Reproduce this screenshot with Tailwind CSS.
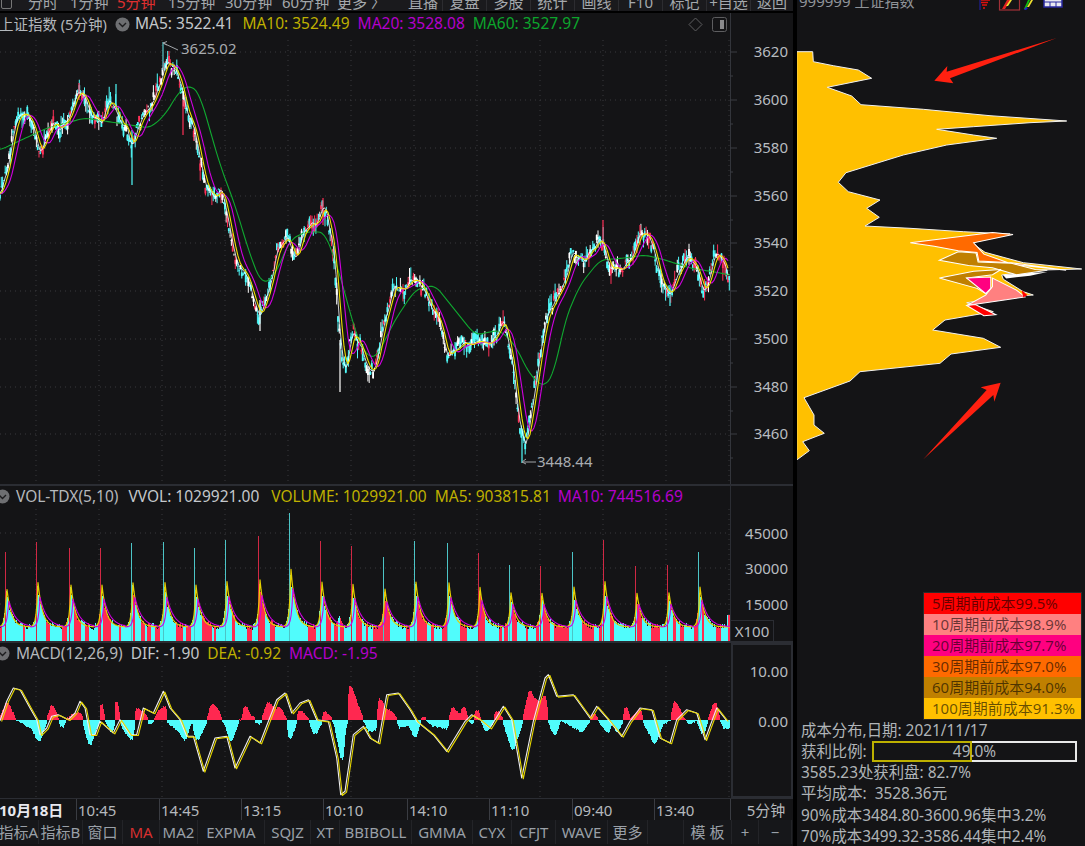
<!DOCTYPE html>
<html lang="zh"><head><meta charset="utf-8">
<script src="https://cdn.jsdelivr.net/npm/@tailwindcss/browser@4"></script>
<title>上证指数</title></head>
<body class="m-0 bg-[#141416]">
<div class="w-[1085px] h-[846px] overflow-hidden flex bg-[#141416] text-[15px] leading-none text-[#b4b8bc] font-['Noto_Sans','Noto_Sans_CJK_SC',sans-serif]">

  <!-- left column -->
  <div class="w-[793px] h-full flex flex-col shrink-0">
    <!-- toolbar -->
    <div class="h-[13px] shrink-0 overflow-hidden bg-[#1a1a1d] border-b-2 border-black">
      <div class="h-[24px] -mt-[10px] flex items-center text-[#a4a8ac] whitespace-nowrap [&>span]:shrink-0">
        <span class="w-[28px] pl-[1px]"><span class="block w-[11px] h-[14px] border border-[#777] rounded-[2px]"></span></span>
        <span class="w-[42px]">分时</span>
        <span class="w-[47px]">1分钟</span>
        <span class="w-[51px] text-[#e03030]">5分钟</span>
        <span class="w-[57px]">15分钟</span>
        <span class="w-[57px]">30分钟</span>
        <span class="w-[55px]">60分钟</span>
        <span class="w-[71px]">更多 〉</span>
        <span class="w-[35px] border-r border-[#2c2c30] h-[24px] flex items-center">直播</span>
        <span class="w-[44px] border-r border-[#2c2c30] h-[24px] flex items-center justify-center">复盘</span>
        <span class="w-[44px] border-r border-[#2c2c30] h-[24px] flex items-center justify-center">多股</span>
        <span class="w-[44px] border-r border-[#2c2c30] h-[24px] flex items-center justify-center">统计</span>
        <span class="w-[44px] border-r border-[#2c2c30] h-[24px] flex items-center justify-center">画线</span>
        <span class="w-[44px] border-r border-[#2c2c30] h-[24px] flex items-center justify-center">F10</span>
        <span class="w-[44px] border-r border-[#2c2c30] h-[24px] flex items-center justify-center">标记</span>
        <span class="w-[44px] border-r border-[#2c2c30] h-[24px] flex items-center justify-center">+自选</span>
        <span class="w-[42px] h-[24px] flex items-center justify-center">返回</span>
      </div>
    </div>

    <!-- main pane -->
    <div class="h-[473px] shrink-0 flex border-b-2 border-[#2b2d33]">
      <div class="w-[730px] flex flex-col shrink-0">
        <div class="h-[22px] shrink-0 flex items-center whitespace-nowrap text-[15.5px]">
          <span class="w-[116px] -ml-[1px] shrink-0 text-[14.5px]">上证指数 (5分钟)</span>
          <svg width="15" height="15" viewBox="0 0 15 15" class="shrink-0"><circle cx="7.5" cy="7.5" r="7" fill="#6e6f72"/><path d="M4 6l3.5 3.5L11 6" fill="none" stroke="#1c1c1e" stroke-width="1.4"/></svg>
          <span class="ml-[5px] text-[#c4c8cc]">MA5: 3522.41</span>
          <span class="ml-[9px] text-[#bfb000]">MA10: 3524.49</span>
          <span class="ml-[8px] text-[#b400cc]">MA20: 3528.08</span>
          <span class="ml-[8px] text-[#0ca52c]">MA60: 3527.97</span>
          <span class="flex-1"></span>
          <svg width="15" height="15" viewBox="0 0 15 15" class="shrink-0 mr-[9px]"><path d="M7.5 1L14 7.5 7.5 14 1 7.5z" fill="none" stroke="#5e5e60" stroke-width="1"/></svg>
          <svg width="15" height="15" viewBox="0 0 15 15" class="shrink-0 mr-[3px]"><rect x=".5" y=".5" width="14" height="14" rx="2" fill="none" stroke="#5e5e60"/><rect x="8" y="3" width="4" height="9" fill="#8a8a8c"/></svg>
        </div>
        <svg id="main" width="730" height="449" viewBox="0 35 730 449" class="block"></svg>
      </div>
      <svg id="mainAxis" width="63" height="471" viewBox="730 13 63 471" class="block" font-size="15" fill="#b8bcc0">
        <g text-anchor="end">
          <text x="788" y="57">3620</text><text x="788" y="105">3600</text><text x="788" y="153">3580</text><text x="788" y="201">3560</text><text x="788" y="248">3540</text><text x="788" y="296">3520</text><text x="788" y="344">3500</text><text x="788" y="392">3480</text><text x="788" y="439">3460</text>
        </g>
      </svg>
    </div>

    <!-- volume pane -->
    <div class="h-[157px] shrink-0 flex border-b-2 border-[#2b2d33]">
      <div class="w-[730px] flex flex-col shrink-0">
        <div class="h-[21px] shrink-0 flex items-center whitespace-nowrap text-[15.5px]">
          <svg width="15" height="15" viewBox="0 0 15 15" class="shrink-0 -ml-[5px]"><circle cx="7.5" cy="7.5" r="7" fill="#6e6f72"/><path d="M4 6l3.5 3.5L11 6" fill="none" stroke="#1c1c1e" stroke-width="1.4"/></svg>
          <span class="ml-[6px]">VOL-TDX(5,10)</span>
          <span class="ml-[10px] text-[#c4c8cc]">VVOL: 1029921.00</span>
          <span class="ml-[12px] text-[#bfb000]">VOLUME: 1029921.00</span>
          <span class="ml-[8px] text-[#bfb000]">MA5: 903815.81</span>
          <span class="ml-[7px] text-[#b400cc]">MA10: 744516.69</span>
        </div>
        <svg id="vol" width="730" height="134" viewBox="0 508 730 134" class="block"></svg>
      </div>
      <div class="relative w-[63px] flex flex-col items-end pr-[5px] text-[15px] text-[#b8bcc0] border-l border-[#2b2d33]">
        <span class="mt-[40px]">45000</span>
        <span class="mt-[20px]">30000</span>
        <span class="mt-[21px]">15000</span>
        <span class="absolute left-0 bottom-0 w-[43px] h-[21px] border-r border-t border-[#2b2d33] bg-[#141416] flex items-center justify-center">X100</span>
      </div>
    </div>

    <!-- macd pane -->
    <div class="h-[155px] shrink-0 flex">
      <div class="w-[731px] flex flex-col shrink-0">
        <div class="h-[21px] shrink-0 flex items-center whitespace-nowrap text-[15.5px]">
          <svg width="15" height="15" viewBox="0 0 15 15" class="shrink-0 -ml-[5px]"><circle cx="7.5" cy="7.5" r="7" fill="#6e6f72"/><path d="M4 6l3.5 3.5L11 6" fill="none" stroke="#1c1c1e" stroke-width="1.4"/></svg>
          <span class="ml-[6px]">MACD(12,26,9)</span>
          <span class="ml-[8px] text-[#c4c8cc]">DIF: -1.90</span>
          <span class="ml-[8px] text-[#bfb000]">DEA: -0.92</span>
          <span class="ml-[8px] text-[#b400cc]">MACD: -1.95</span>
        </div>
        <svg id="macd" width="731" height="134" viewBox="0 666 731 134" class="block overflow-visible"></svg>
      </div>
      <div class="w-[62px] border-2 border-[#2b2d33] flex flex-col items-end pr-[3px] text-[15px] text-[#b8bcc0]">
        <span class="mt-[19px]">10.00</span>
        <span class="mt-[35px]">0.00</span>
      </div>
    </div>

    <!-- time axis -->
    <div class="h-[22px] shrink-0 flex items-center border-t border-[#2b2d33] whitespace-nowrap [&>span]:pt-[2px]">
      <span class="w-[77px] -ml-[1px] shrink-0 font-bold text-[#e8e8ee]">10月18日</span>
      <span class="w-[83px] pl-[1px] border-l border-[#3a3c42] h-full flex items-center">10:45</span>
      <span class="w-[82px] pl-[1px] border-l border-[#3a3c42] h-full flex items-center">14:45</span>
      <span class="w-[82px] pl-[1px] border-l border-[#3a3c42] h-full flex items-center">13:15</span>
      <span class="w-[84px] pl-[1px] border-l border-[#3a3c42] h-full flex items-center">10:10</span>
      <span class="w-[82px] pl-[1px] border-l border-[#3a3c42] h-full flex items-center">14:10</span>
      <span class="w-[83px] pl-[1px] border-l border-[#3a3c42] h-full flex items-center">11:10</span>
      <span class="w-[82px] pl-[1px] border-l border-[#3a3c42] h-full flex items-center">09:40</span>
      <span class="w-[76px] pl-[1px] border-l border-[#3a3c42] h-full flex items-center">13:40</span>
      <span class="flex-1 border-l border-[#3a3c42] h-full flex items-center justify-center pl-[8px]">5分钟</span>
    </div>

    <!-- bottom bar -->
    <div class="h-[24px] shrink-0 flex items-center text-[#9aa0a8] bg-[#16171a] whitespace-nowrap [&>span]:h-full [&>span]:flex [&>span]:items-center [&>span]:justify-center [&>span]:border-r [&>span]:border-[#232428] [&>span]:pt-[1px]">
      <span class="w-[39px] shrink-0 !justify-end">指标A</span>
      <span class="w-[44px] shrink-0">指标B</span>
      <span class="w-[40px] shrink-0">窗口</span>
      <span class="w-[37px] shrink-0 text-[#d83030]">MA</span>
      <span class="w-[38px] shrink-0">MA2</span>
      <span class="w-[67px] shrink-0">EXPMA</span>
      <span class="w-[46px] shrink-0">SQJZ</span>
      <span class="w-[29px] shrink-0">XT</span>
      <span class="w-[72px] shrink-0">BBIBOLL</span>
      <span class="w-[61px] shrink-0">GMMA</span>
      <span class="w-[39px] shrink-0">CYX</span>
      <span class="w-[44px] shrink-0">CFJT</span>
      <span class="w-[52px] shrink-0">WAVE</span>
      <span class="w-[40px] shrink-0">更多</span>
      <span class="w-[36px] shrink-0"></span>
      <span class="w-[48px] shrink-0">模 板</span>
      <span class="w-[27px] shrink-0">+</span>
      <span class="w-[33px] shrink-0">−</span>
    </div>
  </div>

  <!-- divider -->
  <div class="w-[4px] h-full bg-black shrink-0"></div>

  <!-- right panel -->
  <div class="flex-1 h-full flex flex-col relative">
    <div class="h-[12px] shrink-0 overflow-hidden relative">
      <div class="-mt-[6px] h-[14px] flex items-center pl-[2px] text-[#8f9398] whitespace-nowrap">999999 上证指数</div>
      <svg width="288" height="12" viewBox="797 0 288 12" class="absolute left-0 top-0">
        <g><path d="M981 0h9M981 2.5h7M982 5h5M983 8h2" stroke="#e01010" stroke-width="1.6"/><path d="M980 0v10" stroke="#2020b0" stroke-width="1"/></g>
        <rect x="999.5" y="-3" width="20" height="13" fill="none" stroke="#a03038" stroke-width="1.2"/>
        <path d="M1002 9l5-9h4l-6 9z" fill="#e02020"/><path d="M1006 6l4-6h2l-4 6z" fill="#f0e030"/>
        <path d="M1024 9l4-9h2l-4 9z" fill="#10c010"/><path d="M1027 7l4-7h2l-4 7z" fill="#f0e030"/><path d="M1024 10l2-3 2 1-2 2z" fill="#2020d0"/>
        <rect x="1044" y="-2" width="18" height="9" fill="#e8e8f0" stroke="#2828a0" stroke-width="1.5"/><path d="M1044 2h18M1050 2v5M1056 2v5" stroke="#2828a0"/>
      </svg>
    </div>
    <svg width="288" height="580" viewBox="797 12 288 580" class="block shrink-0">
      <polygon id="chips" fill="#ffc000" stroke="#f0f0f0" stroke-width="1" stroke-linejoin="round"/>
      <g transform="translate(900,225) scale(.3425)" stroke="#fff" stroke-width="3">
        <path d="M300 145L430 137 380 148 310 156z" fill="#fff" stroke="none"/>
        <polygon fill="#ff6a00" points="30,52 270,22 330,28 215,52 245,85 330,115 485,132 410,122 325,110 230,105 225,80 170,75 100,62"/>
        <polygon fill="#c08000" points="115,103 170,78 222,82 228,108 325,112 395,130 430,132 340,145 295,132 270,125 200,118"/>
        <polygon fill="#c08000" points="115,155 215,135 295,130 270,145 195,155 250,190 255,203 225,185"/>
        <polygon fill="#ff8080" points="270,155 340,190 365,210 300,220 195,235 250,205 270,180"/>
        <polygon fill="#ff0080" points="195,155 265,152 265,185 250,200"/>
        <polygon fill="#ff0000" points="195,235 220,232 280,262 245,265"/>
        <polygon fill="#ff0000" stroke="none" points="355,190 372,205 360,212"/>
      </g>
      <g transform="translate(790,0) scale(.33333)"><polygon fill="#ff2010" points="800,114 470,215 472,198 433,242 490,250 480,235"/></g>
      <g transform="translate(790,220) scale(.33333)"><polygon fill="#ff2010" points="400,718 590,510 572,502 632,488 613,545 610,525"/></g>
    </svg>
    <div class="w-[159px] ml-[126px] border border-[#2a2a2a] shrink-0 text-black/60 whitespace-nowrap">
      <div class="h-[21px] pl-[8px] flex items-center bg-[#ff0000]">5周期前成本99.5%</div>
      <div class="h-[21px] pl-[8px] flex items-center bg-[#ff8080]">10周期前成本98.9%</div>
      <div class="h-[21px] pl-[8px] flex items-center bg-[#ff0080]">20周期前成本97.7%</div>
      <div class="h-[21px] pl-[8px] flex items-center bg-[#ff6a00]">30周期前成本97.0%</div>
      <div class="h-[21px] pl-[8px] flex items-center bg-[#c08000]">60周期前成本94.0%</div>
      <div class="h-[21px] pl-[8px] flex items-center bg-[#ffc000]">100周期前成本91.3%</div>
    </div>
    <div class="pl-[4px] flex flex-col whitespace-nowrap text-[#b0b4b8] text-[15.4px]">
      <div class="h-[21px] flex items-center">成本分布,日期:&nbsp;2021/11/17</div>
      <div class="h-[21px] flex items-center"><span class="w-[71px] shrink-0">获利比例:</span>
        <div class="relative w-[205px] h-[21px] border-2 border-[#e8e8e8] flex items-center justify-center shrink-0">
          <div class="absolute -left-[2px] -top-[2px] w-[100px] h-[21px] border-2 border-[#bdb000]"></div>
          <span class="relative">49.0%</span>
        </div>
      </div>
      <div class="h-[21.4px] flex items-center">3585.23处获利盘:&nbsp;82.7%</div>
      <div class="h-[21.4px] flex items-center">平均成本:&nbsp;&nbsp;3528.36元</div>
      <div class="h-[21.4px] flex items-center">90%成本3484.80-3600.96集中3.2%</div>
      <div class="h-[21.4px] flex items-center">70%成本3499.32-3586.44集中2.4%</div>
    </div>
  </div>
</div>

<script>
let seed=12345;function R(){seed=(seed*1664525+1013904223)%4294967296;return seed/4294967296;}
function interp(p,x){if(x<=p[0][0])return p[0][1];for(let i=1;i<p.length;i++){if(x<=p[i][0]){const a=p[i-1],b=p[i];return a[1]+(b[1]-a[1])*(x-a[0])/(b[0]-a[0]);}}return p[p.length-1][1];}
function smooth(p,w,lag,step){let o=[];for(let x=p[0][0];x<=p[p.length-1][0];x+=step){let s=0,n=0;for(let d=-w;d<=w;d+=1){s+=interp(p,x+d-lag);n++;}o.push([x,s/n]);}return o;}
function line(p,c,w){return '<polyline fill="none" stroke="'+c+'" stroke-width="'+w+'" stroke-linejoin="round" points="'+p.map(a=>a[0].toFixed(1)+','+a[1].toFixed(1)).join(' ')+'"/>';}
const dot='#39393c';
const vx=[];for(let x=36;x<730;x+=63)vx.push(x);

/* main chart */
const px0=[[0,198],[8,165],[14,125],[22,113],[30,115],[38,150],[44,143],[52,122],[60,128],[68,115],[78,90],[84,98],[92,118],[100,125],[110,100],[118,118],[125,125],[132,150],[140,118],[150,105],[158,90],[165,60],[172,65],[180,80],[186,110],[195,135],[205,185],[213,195],[222,190],[232,245],[240,270],[250,285],[260,320],[268,290],[278,245],[288,235],[295,260],[305,225],[315,225],[325,205],[333,250],[340,340],[345,380],[352,330],[360,345],[372,378],[380,340],[392,290],[405,285],[415,280],[425,295],[435,310],[448,355],[460,345],[475,340],[490,345],[503,320],[512,360],[520,430],[525,450],[535,385],[545,320],[552,305],[562,290],[572,255],[585,260],[600,240],[610,270],[620,272],[632,255],[642,232],[650,240],[660,280],[670,298],[680,265],[692,255],[703,295],[716,250],[724,265],[730,290]];
const px=[];for(let x=0;x<=730;x+=3.5){px.push([x,interp(px0,x)+(R()-.5)*9]);}
const g60=[[0,150],[47,128],[85,118],[130,125],[150,128],[165,115],[180,90],[192,85],[200,95],[210,130],[220,165],[235,205],[250,255],[262,285],[275,275],[290,240],[305,232],[325,232],[340,275],[352,320],[362,350],[375,360],[395,320],[415,290],[435,285],[455,310],[475,335],[500,330],[515,345],[530,375],[545,388],[555,370],[565,320],[580,285],[600,260],[625,258],[645,255],[665,260],[690,268],[715,272],[730,275]];
let h='';
[52,100,148,196,243,291,339,387,434].forEach(y=>h+='<line x1="0" x2="730" y1="'+y+'" y2="'+y+'" stroke="'+dot+'" stroke-dasharray="1 4"/>');
vx.forEach(x=>h+='<line x1="'+x+'" x2="'+x+'" y1="40" y2="484" stroke="'+dot+'" stroke-dasharray="1 4"/>');
for(let x=0;x<730;x+=1.3){
  const c=interp(px,x)+(R()-.5)*6;const o=c+(R()-.5)*15;
  const t=Math.min(o,c)-R()*R()*13,b=Math.max(o,c)+R()*R()*13;
  const r=R();const col=r<.24?'#ffffff':(r<.44?'#ff3058':'#50fcfc');
  h+='<line x1="'+x+'" x2="'+x+'" y1="'+t+'" y2="'+b+'" stroke="'+col+'" stroke-width="1"/>';
  h+='<line x1="'+x+'" x2="'+x+'" y1="'+Math.min(o,c)+'" y2="'+Math.max(o,c)+'" stroke="'+col+'" stroke-width="1.8"/>';
}
[[132,130,185,'#50fcfc'],[163,42,70,'#58c8cc'],[340,340,392,'#fff'],[260,300,331,'#fff'],[670,285,306,'#50fcfc'],[603,220,250,'#ff3058'],[640,225,245,'#ff3058'],[323,198,225,'#ff3058'],[522,430,463,'#50fcfc'],[79,83,100,'#ff3058'],[116,84,110,'#50fcfc'],[183,100,135,'#ff3058']].forEach(w=>h+='<line x1="'+w[0]+'" x2="'+w[0]+'" y1="'+w[1]+'" y2="'+w[2]+'" stroke="'+w[3]+'" stroke-width="1.2"/>');
h+=line(smooth(g60,6,0,2),'#10a830',1.1);
h+=line(smooth(px,1,1,2),'#ffffff',.8);
h+=line(smooth(px,6,7,2),'#d000e0',1.1);
h+=line(smooth(px,3,3,2),'#f0e000',1.1);
h+='<path d="M167 41.5l-4 1.5 4 2M163 43l15 7" fill="none" stroke="#a0a4a8"/><text x="181" y="54" font-size="15" fill="#a8acb0">3625.02</text>';
h+='<path d="M526 459l-4 3 4 2M522 462h14" fill="none" stroke="#a0a4a8"/><text x="537" y="467" font-size="15" fill="#a8acb0">3448.44</text>';
document.getElementById('main').innerHTML=h;

let ax='<line x1="730.5" x2="730.5" y1="13" y2="484" stroke="#33353b"/>';
[52,100,148,196,243,291,339,387,434].forEach(y=>ax+='<line x1="730" x2="737" y1="'+y+'" y2="'+y+'" stroke="#3a3c42"/><line x1="730" x2="733" y1="'+(y+24)+'" y2="'+(y+24)+'" stroke="#3a3c42"/>');
document.getElementById('mainAxis').insertAdjacentHTML('afterbegin',ax);

/* volume */
const pk=[[4.7,553,0],[36,543,0],[69,549,0],[100,549,0],[131,544,1],[163,543,1],[194,549,1],[225,541,1],[258,537,0],[289,514,1],[320,542,0],[351,547,0],[383,558,1],[414,542,1],[447,544,1],[478,554,0],[509,566,1],[540,567,0],[572,553,1],[603,541,0],[635,567,0],[667,566,0],[698,553,1]];
function nearest(x){let best=pk[0];pk.forEach(p=>{if(x>=p[0]-5)best=p;});return best;}
function env(x,f,lag,w){const p=nearest(x);const H=642-p[1];const d=x-p[0]-lag;const e=d>=0?Math.exp(-d/w):Math.exp(d/1.6);return 14+f*H*e;}
let v='';
[534,569,605].forEach(y=>v+='<line x1="0" x2="730" y1="'+y+'" y2="'+y+'" stroke="'+dot+'" stroke-dasharray="1 4"/>');
vx.forEach(x=>v+='<line x1="'+x+'" x2="'+x+'" y1="510" y2="642" stroke="'+dot+'" stroke-dasharray="1 4"/>');
let col=1,run=0;
for(let x=0;x<730;x+=1){
  if(run--<=0){col=R()<.62?1:0;run=Math.floor(R()*4)+1;}
  let ht=env(x,.42,.8,5.5)+(R()-.55)*6;
  if(ht<4)ht=4;
  if(Math.abs(x-339)<5)ht=Math.max(ht,25-Math.abs(x-339)*2.5);
  if(x>726)ht=26;
  v+='<rect x="'+x+'" width="1" y="'+(642-Math.round(ht))+'" height="'+Math.round(ht)+'" fill="'+(col?'#50fcfc':'#ff2c50')+'"/>';
}
pk.forEach(p=>{v+='<rect x="'+Math.round(p[0])+'" width="1" y="'+p[1]+'" height="'+(642-p[1])+'" fill="'+(p[2]?'#4cc4c6':'#d02844')+'"/>';});
let yl=[],ml=[];for(let x=0;x<=730;x+=1){yl.push([x,642-env(x,.45,2,4.5)]);ml.push([x,642-env(x,.3,4,7)]);}
v+=line(yl,'#e6d000',1.2);v+=line(ml,'#d000e0',1.1);
document.getElementById('vol').innerHTML=v;

/* MACD */
const hist=[[0,3],[3,8],[7,18],[12,8],[16,0],[20,-1],[27,-6],[33,-10],[39,-22],[44,-8],[47,0],[52,15],[57,4],[60,-2],[62,-8],[66,0],[72,5],[80,8],[83,0],[84,-4],[90,-26],[96,-8],[100,-1],[101,17],[105,0],[108,-5],[112,-13],[115,0],[116,21],[120,0],[125,-12],[132,-20],[135,0],[137,12],[145,6],[148,0],[150,-5],[154,0],[158,8],[165,14],[167,0],[170,-4],[180,-12],[185,-21],[190,-5],[193,0],[195,-14],[198,-20],[205,-5],[207,0],[212,16],[218,10],[222,0],[226,-5],[231,-22],[236,-8],[239,0],[243,2],[245,15],[250,5],[255,2],[256,-6],[257,0],[260,-5],[262,0],[268,18],[275,12],[280,12],[287,0],[290,-20],[296,-3],[300,10],[305,5],[309,0],[315,-15],[320,-6],[322,0],[325,9],[330,3],[332,0],[335,-5],[340,-30],[342,-42],[345,-10],[348,0],[350,35],[355,22],[360,8],[363,0],[365,-3],[370,-12],[375,-10],[377,0],[380,22],[385,12],[390,10],[395,3],[397,0],[400,-8],[410,-6],[415,-18],[420,-3],[423,4],[426,0],[433,-6],[447,-9],[449,0],[453,13],[460,4],[464,14],[468,0],[473,-4],[477,11],[481,0],[486,-11],[492,-5],[497,10],[503,0],[513,-31],[523,0],[530,30],[533,22],[540,18],[545,25],[548,0],[555,-16],[560,0],[573,-7],[582,-12],[590,0],[594,7],[598,0],[608,-13],[613,0],[617,-13],[623,0],[626,14],[630,0],[640,11],[643,0],[655,-24],[662,-5],[671,0],[675,19],[683,3],[690,-4],[697,0],[703,-15],[708,0],[715,18],[720,0],[725,-9],[730,-9]];
const difz8=[[0,128],[20,70],[40,30],[60,35],[90,90],[110,125],[120,170],[140,150],[155,115],[175,110],[205,125],[225,105],[240,70],[255,90],[270,170],[285,170],[300,130],[340,165],[360,125],[390,170],[410,170],[430,90],[460,105],[490,40],[510,90],[540,125],[560,175],[580,175],[610,280],[645,180],[680,175],[705,270],[750,175],[780,195],[830,65],[855,45],[875,105],[900,75],[925,65],[950,125],[985,130],[1010,240],[1022,350],[1035,340],[1060,170],[1090,145],[1110,180],[1135,195],[1160,50],[1195,45]];
const difz9=[[30,95],[50,130],[100,170],[140,220],[195,130],[215,110],[240,125],[270,150],[310,85],[335,125],[365,300],[400,130],[435,0],[445,-10],[470,55],[520,50],[570,120],[590,85],[625,125],[665,175],[690,130],[720,90],[755,95],[780,180],[810,195],[830,125],[860,95],[890,105],[915,185],[950,90],[980,128]];
const dif=difz8.map(a=>[a[0]/3,680+a[1]/3]).concat(difz9.map(a=>[400+a[0]/3,680+a[1]/3]));
let m='';
vx.forEach(x=>m+='<line x1="'+x+'" x2="'+x+'" y1="668" y2="800" stroke="'+dot+'" stroke-dasharray="1 4"/>');
for(let x=0;x<730;x+=1){
  const c=interp(hist,x+.5);let a=c;
  [interp(hist,x-.5),interp(hist,x+1.5)].forEach(n=>{if(n*c>0&&Math.abs(n)>Math.abs(a))a=n;});
  const t=Math.round(a+(a!==0?(R()-.5)*1.6:0));
  const y=t>=0?722-t:722;const hh=Math.max(Math.abs(t),1);
  m+='<rect x="'+x+'" width="1" y="'+y+'" height="'+hh+'" fill="'+(a>=0?'#ff2850':'#50fcfc')+'"/>';
}
const wl=dif;
m+=line(wl,'#f0f0f0',1.1);
m+=line(wl.map(a=>[a[0]+1.6,a[1]+.8]),'#e8d800',1.1);
document.getElementById('macd').innerHTML=m;

/* chip distribution */
const z3=[[20,155],[68,155],[70,185],[130,197],[205,210],[245,235],[180,248],[112,262],[185,288],[213,314],[400,328],[600,347],[830,363],[720,368],[550,380],[440,388],[550,405],[620,415],[470,435],[340,465],[168,518],[145,547],[175,575],[270,600],[230,625],[268,652],[225,678]];
const z4=[[360,25],[520,35],[660,42],[545,68],[585,97],[700,128],[875,147],[760,150],[635,165],[640,178],[700,215],[730,225],[650,230],[530,248],[610,275],[465,300],[428,330],[580,355],[632,382],[483,402],[450,430],[210,455],[180,483],[42,533],[72,585],[72,615],[103,640],[38,665],[58,692],[20,720]];
const pts=z3.map(a=>[790+a[0]/3,a[1]/3]).concat(z4.map(a=>[790+a[0]/3,220+a[1]/3]));
document.getElementById('chips').setAttribute('points',pts.map(a=>a[0].toFixed(1)+','+a[1].toFixed(1)).join(' '));
</script>
</body></html>
